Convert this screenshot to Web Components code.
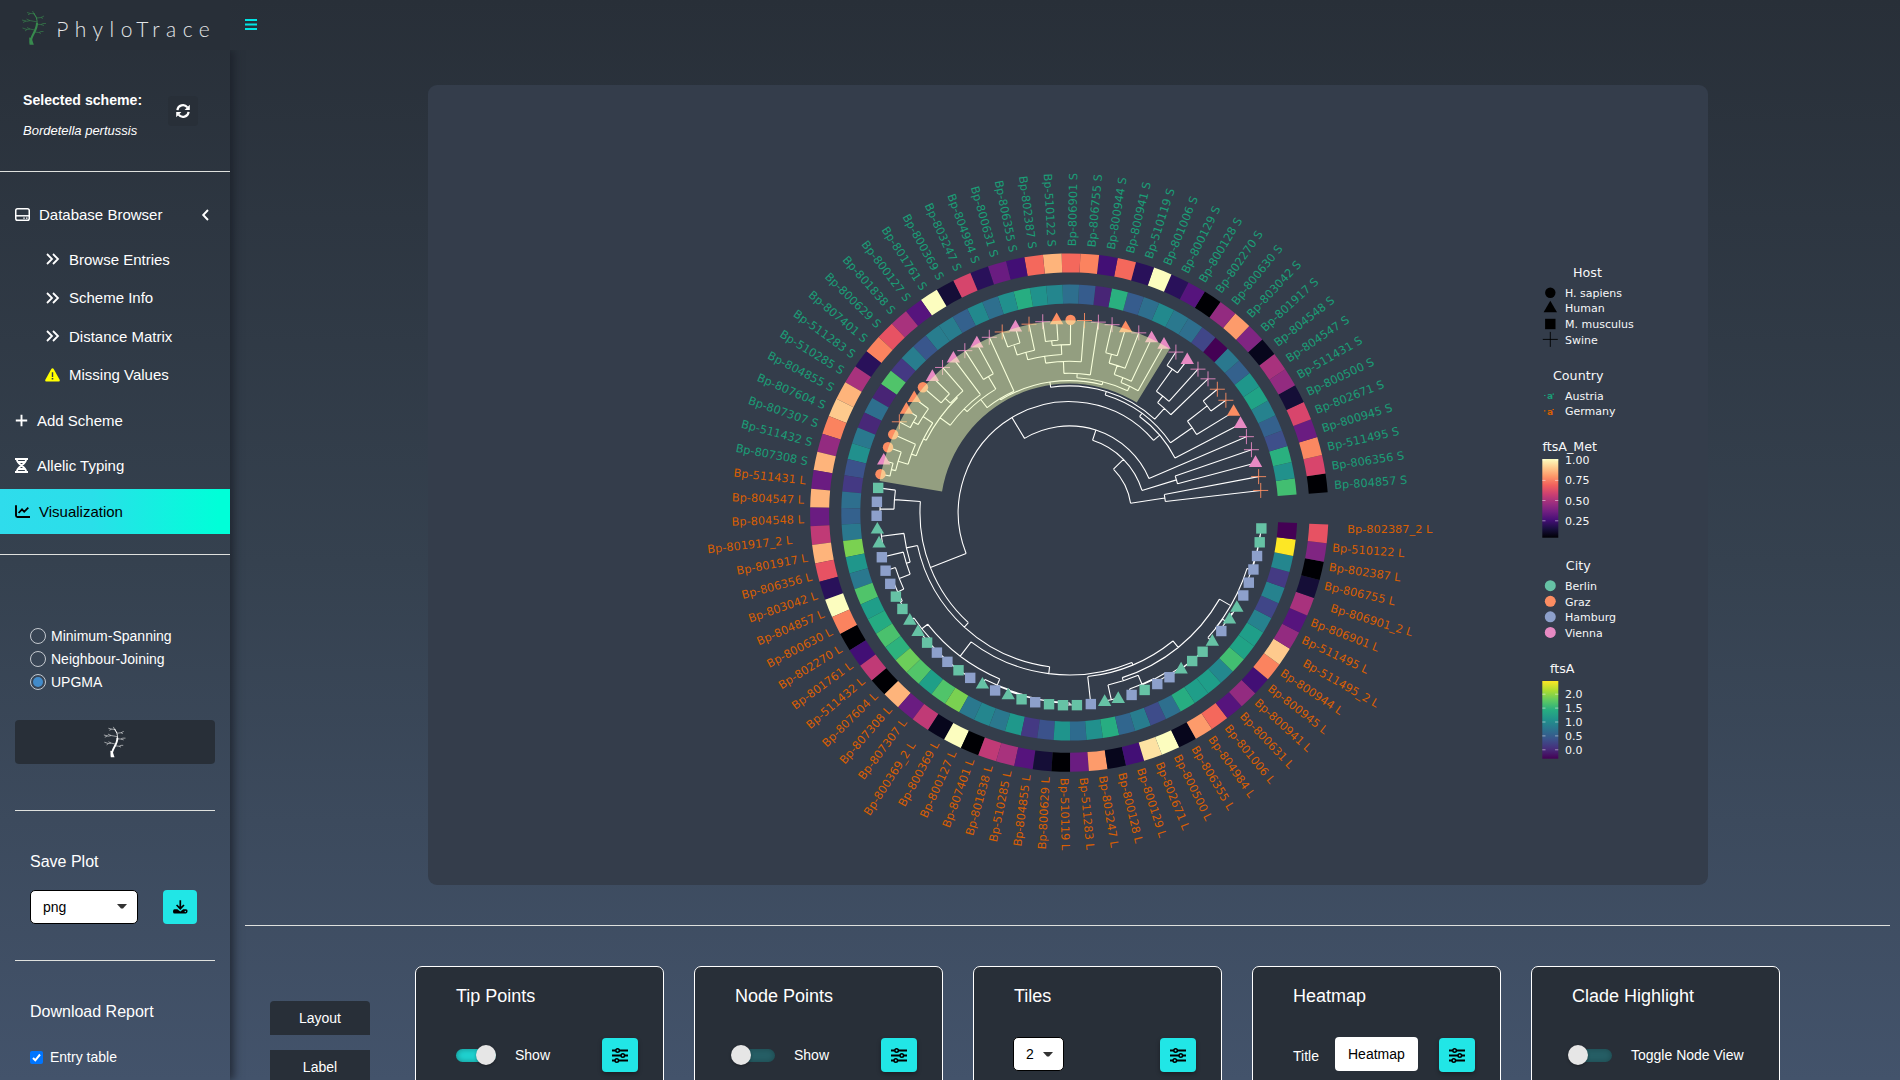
<!DOCTYPE html>
<html lang="en">
<head>
<meta charset="utf-8">
<title>PhyloTrace</title>
<style>
html,body{margin:0;height:1080px;overflow:hidden}
body{font-family:"Liberation Sans",Arial,sans-serif;font-size:14px;color:#fff;background:linear-gradient(#282f38,#35414f 52%,#43536b)}
</style>
</head>
<body>
<phylo-app></phylo-app>
<script>
const define=(name,css,html,setup)=>customElements.define(name,class extends HTMLElement{
  constructor(){
    super();
    const root=this.attachShadow({mode:'open'});
    const t=document.createElement('template');
    t.innerHTML=`<style>*{box-sizing:border-box}${css}</style>${html}`;
    root.append(t.content.cloneNode(true));
    this._setup=setup;
  }
  connectedCallback(){ if(this._setup&&!this._done){this._done=true;this._setup(this.shadowRoot,this);} }
});

/* ---------- icons ---------- */
const ICONS={
  disk:[15,13,'<g fill="none" stroke="currentColor" stroke-width="1.5"><rect x=".75" y=".75" width="13.5" height="11.5" rx="1.8"/><path d="M1 7.8H14"/></g><path d="M8.3 9.4h1.5v1.4H8.3zM11 9.4h1.5v1.4H11z" fill="currentColor"/>'],
  left:[7,12,'<path d="M6 1L1.2 6L6 11" fill="none" stroke="currentColor" stroke-width="1.9"/>'],
  dbl:[13,12,'<path d="M1 1L6 6L1 11M7 1L12 6L7 11" fill="none" stroke="currentColor" stroke-width="1.8"/>'],
  warn:[15,14,'<path d="M7.5.3Q8.3.3 8.7 1L14.8 12Q15 13.6 13.7 13.6H1.3Q0 13.6.2 12L6.3 1Q6.7.3 7.5.3Z" fill="#ff0"/><path d="M6.8 4.3h1.4v4.6H6.8zM6.7 10h1.6v1.6H6.7z" fill="#333d4a"/>'],
  plus:[13,13,'<path d="M6.5 .8V12.2M.8 6.5H12.2" stroke="currentColor" stroke-width="1.9"/>'],
  hour:[13,15,'<path d="M0 0H13V1.9H0ZM0 13.1H13V15H0Z" fill="currentColor"/><path d="M2 2C2 6 11 9 11 13M11 2C11 6 2 9 2 13M2.8 4H10.2M2.8 11H10.2" fill="none" stroke="currentColor" stroke-width="1.9"/>'],
  chart:[15,13,'<path d="M1 .3V10.5Q1 12 2.5 12H15" fill="none" stroke="currentColor" stroke-width="1.9"/><path d="M3.6 8L7 4.4L9.2 6.8L13.3 2.6" fill="none" stroke="currentColor" stroke-width="1.8"/>'],
  sync:[14,14,'<path d="M1.4 6.2A5.6 5.6 0 0 1 11.4 3.400M12.6 7.8A5.6 5.6 0 0 1 2.6 10.600" fill="none" stroke="currentColor" stroke-width="2.200"/><path d="M13.8 .8V6H8.6ZM.2 13.2V8H5.4Z" fill="currentColor"/>'],
  bars:[12,11,'<path d="M0 1H12M0 5.5H12M0 10H12" stroke="currentColor" stroke-width="1.9"/>'],
  down:[15,14,'<path d="M7.3 .2V8M3.6 5L7.3 8.7L11 5" fill="none" stroke="currentColor" stroke-width="1.7"/><path d="M1.6 9.2H4.4L7.3 11.4L10.2 9.2H13Q14.6 9.2 14.6 11T13 13.6H1.6Q0 13.6 0 11.4T1.6 9.2Z" fill="currentColor"/><circle cx="12.3" cy="11.5" r=".7" fill="#21e6e6"/>'],
  sliders:[16,15,'<path d="M0 2.5H16M0 7.5H16M0 12.5H16" stroke="currentColor" stroke-width="2"/><g fill="#21e6e6" stroke="currentColor" stroke-width="1.5"><circle cx="5.6" cy="2.5" r="1.75"/><circle cx="10.8" cy="7.5" r="1.75"/><circle cx="4.8" cy="12.5" r="1.75"/></g>'],
  caret:[10,5,'<path d="M0 0H10L6 4.6H4Z" fill="currentColor"/>'],
  tree:[26,36,'<g fill="none" stroke="currentColor"><path d="M9.800 33.500C8.600 26 16.200 21.500 16 13" stroke-width="2.100"/><path d="M8.200 27.500L8.600 34.800H12.800L10.600 28Z" fill="currentColor" stroke="none"/><path d="M16 14C16.500 9 15 6.500 13 3.500" stroke-width="1"/><path d="M16 8L13.500 5L11.500 1M14 3.800L9.500 3.500L6 2.500M9.500 3.500L7 4.800M15.800 11.800L9 10.600L6 11.300L1 10M9 10.600L5.500 9M5 11L2 12.500M13.500 20L9 19L6 19.500L1.500 18M9 19L6 17.500M6 19.500L4 21M16 8L20 7.500L23 6M20 7.500L22 8.500M15.500 14.200L20 14.500L22 13.500L25 13.500M20 14.500L23 15.500M13 22L18 22.500L20 21.500L22.500 21.500M18 22.500L20 23.500" stroke-width=".7" stroke-opacity=".85"/></g>']
};
define('ui-icon',':host{display:inline-flex;flex:none}svg{display:block;overflow:visible}','',(r,h)=>{
  const [w,ht,body]=ICONS[h.getAttribute('name')];
  const k=+(h.getAttribute('scale')||1);
  r.innerHTML+=`<svg width="${w*k}" height="${ht*k}" viewBox="0 0 ${w} ${ht}">${body}</svg>`;
});

/* ---------- sidebar pieces ---------- */
define('nav-item',`:host{display:flex;align-items:center;height:45px;padding:0 21px 0 15px;font-size:15px;gap:9px}
 :host([sub]){height:38.500px;padding-left:45px;gap:0}
 :host([active]){background:linear-gradient(90deg,#2fdcec 0%,#2adfe9 40%,#00ffd8 95%);color:#000}
 .i{display:flex;min-width:13px}:host([sub]) .i{width:24px;padding-left:1px}:host([sub][icon=warn]) .i{padding-left:0}.t{flex:1}`,
 '<span class="i"></span><span class="t"><slot></slot></span><slot name="end"></slot>',
 (r,h)=>{r.querySelector('.i').innerHTML=`<ui-icon name="${h.getAttribute('icon')}"></ui-icon>`;});

define('radio-option',`:host{display:flex;align-items:center;height:23px;gap:5px}
 i{width:16px;height:16px;border-radius:50%;border:1px solid #c4c9cf;display:flex;align-items:center;justify-content:center}
 :host([checked]) i::after{content:"";width:10px;height:10px;border-radius:50%;background:#428bca}`,
 '<i></i><span><slot></slot></span>');

define('rule-line',':host{display:block;height:1px;background:#dfe1de}','');

define('select-box',`:host{display:flex;align-items:center;justify-content:space-between;height:34px;background:#fff;color:#000;border:1px solid #000;border-radius:5px;padding:0 10px 0 12px;box-sizing:border-box}ui-icon{color:#333}`,
 '<span><slot></slot></span><ui-icon name="caret"></ui-icon>');

define('icon-button',`:host{display:flex;align-items:center;justify-content:center;background:#21e6e6;color:#000;border-radius:4px;width:36px;height:34px;box-shadow:0 2px 4px rgba(0,0,0,.35)}`,'<slot></slot>');

define('side-bar',`:host{display:flex;flex-direction:column;width:230px;height:1080px;flex:none;overflow:visible}
 .logo{height:50px;display:flex;background:#282f38;padding:10px 0 0 21px}
 .logo ui-icon{color:#388a4e}.logo svg{margin-top:0;overflow:visible}
 .body{flex:1;display:flex;flex-direction:column;box-shadow:4px 0 8px rgba(24,28,38,.7);clip-path:inset(0 -20px 0 0);min-height:0}
 .scheme{display:flex;height:121px;padding:0 32px 0 23px;justify-content:space-between;flex:none}
 .scheme b{display:block;font-size:14.100px;line-height:18px;margin-top:41px}
 .scheme i{display:block;font-size:13px;line-height:16px;margin-top:13.500px}
 .sync{width:30px;height:30px;border-radius:4px;background:#282f38;display:flex;align-items:center;justify-content:center;margin-top:46px}
 nav{padding:20px 0 20px;display:flex;flex-direction:column}
 .sub{padding:3px 0 4px}
 nav-item[active]{margin-top:1px}
 .in{margin:0 15px}
 .radios{padding:69px 30px 0}
 .make{margin:27px 15px 46px;height:44px;background:#282f38;border-radius:4px;display:flex;align-items:center;justify-content:center;flex:none}
 h4{margin:0;font-weight:400;font-size:16px;line-height:20px;padding-left:30px}
 .save{display:flex;padding:0 33px 0 30px;justify-content:space-between;margin:18px 0 36px}
 .check{display:flex;gap:7px;padding-left:30px;align-items:center;margin-top:27px}
 .check span{width:13px;height:13px;border-radius:2px;background:#0075ff;display:flex;align-items:center;justify-content:center}`,
 `<div class="logo"><ui-icon name="tree"></ui-icon><svg width="170" height="36">
   <text x="9.300" y="26.800" font-family="Lato" font-weight="300" font-size="21" fill="#e4e6e8" textLength="153.500" lengthAdjust="spacing">PhyloTrace</text>
   <path d="M10 13.500H13.300V18.500H10Z" fill="#282f38"/></svg></div>
 <div class="body">
  <div class="scheme"><div><b>Selected scheme:</b><i>Bordetella pertussis</i></div><div class="sync"><ui-icon name="sync"></ui-icon></div></div>
  <rule-line></rule-line>
  <nav>
   <nav-item icon="disk">Database Browser<ui-icon name="left" slot="end"></ui-icon></nav-item>
   <div class="sub"><nav-item sub icon="dbl">Browse Entries</nav-item><nav-item sub icon="dbl">Scheme Info</nav-item>
   <nav-item sub icon="dbl">Distance Matrix</nav-item><nav-item sub icon="warn">Missing Values</nav-item></div>
   <nav-item icon="plus">Add Scheme</nav-item><nav-item icon="hour">Allelic Typing</nav-item>
   <nav-item icon="chart" active>Visualization</nav-item>
  </nav>
  <rule-line></rule-line>
  <div class="radios"><radio-option>Minimum-Spanning</radio-option><radio-option>Neighbour-Joining</radio-option><radio-option checked>UPGMA</radio-option></div>
  <div class="make"><ui-icon name="tree" scale=".9"></ui-icon></div>
  <rule-line class="in"></rule-line>
  <h4 style="margin-top:40.500px">Save Plot</h4>
  <div class="save"><select-box style="width:108px">png</select-box><icon-button style="width:34px;box-shadow:none"><ui-icon name="down"></ui-icon></icon-button></div>
  <rule-line class="in"></rule-line>
  <h4 style="margin-top:41.500px">Download Report</h4>
  <div class="check"><span><svg width="11" height="11" viewBox="0 0 11 11"><path d="M2 6L4.300 8.300L9 2.500" fill="none" stroke="#fff" stroke-width="2"/></svg></span>Entry table</div>
 </div>`);

/* ---------- control cards ---------- */
define('toggle-switch',`:host{display:flex;align-items:center;width:44px;height:20px}
 .k{width:40px;height:13px;border-radius:7px;background:#265f66;display:flex;align-items:center;box-shadow:inset 0 0 6px rgba(0,0,0,.25);margin-left:4px}
 .k i{width:20px;height:20px;border-radius:50%;background:#e6e6e6;flex:none;margin-left:-4px;box-shadow:0 1px 3px rgba(0,0,0,.35)}
 :host([on]) .k{background:#1fd3d1;box-shadow:inset 0 0 6px rgba(0,0,0,.35)}:host([on]) .k i{margin-left:20px}`,
 '<div class="k"><i></i></div>');

define('control-card',`:host{display:block;width:249px;height:200px;background:#282f38;border:1px solid #fff;border-radius:7px;box-sizing:border-box;flex:none}
 h3{margin:18px 0 0 40px;font-weight:400;font-size:18px;line-height:22px}
 .row{display:flex;align-items:center;height:36px;margin:30px 25px 0 36px}
 .row ::slotted(icon-button){margin-left:auto}`,
 '<h3></h3><div class="row"><slot></slot></div>',(r,h)=>{r.querySelector('h3').textContent=h.getAttribute('heading');});

define('text-field',':host{display:flex;align-items:center;width:83px;height:34px;background:#fff;color:#000;border-radius:4px;padding-left:13px;box-sizing:border-box}','<span><slot></slot></span>');

define('tab-button',':host{display:flex;align-items:center;justify-content:center;width:100px;height:34px;background:#282f38}:host([first]){border-radius:4px 4px 0 0}','<span><slot></slot></span>');

/* ---------- circular phylogeny ---------- */
const TIPS=[
 '804857','806356','511495','800945','802671','800500','511431','804547','804548','801917','803042','800630','802270','800128','800129','801006','510119','800941','800944','806755','806901','510122','802387','806355','800631','804984','803247','800369','801761','800127','801838','800629','807401','511283','510285','804855','807604','807307','511432','807308',
 '511431','804547','804548','801917_2','801917','806356','803042','804857','800630','802270','801761','511432','807604','807308','807307','800369_2','800369','800127','807401','801838','510285','804855','800629','510119','511283','803247','800128','800129','802671','800500','806355','804984','801006','800631','800941','800945','800944','511495_2','511495','806901','806901_2','806755','802387','510122','802387_2'];
const MARKS='+G +G tV +V +V tV tG +G +G +V +V tV +V tV tV +V tG +V +V +G oG tG +V +G tV +G +V tV +V tV +V tV oG tG tG +G oG oG tV oG sB sH sH tB tB sH sH sH sB sB tB tB sB sH sH sB sH tB sH tB sB sH sB sB sB sH tB tB sH sB sH sH tB sB sB tB sH tB tB sH sH sH sH sB sB'.split(' ');
const OUTER='000004 d8456c fb8861 6a1c81 d8456c 150e37 932b80 a8327d 07061c 802582 fd9b6b 932b80 000004 56147d 29115a fcfdbf 29115a f4685c 420f75 fb835f f4685c feb47b f4685c 420f75 6a1c81 29115a d6456c 150e37 fcfdbf 56147d a8327d e75263 fb835f 29115a a8327d feb47b feca8d fb835f 932b80 feb47b 6a1c81 feb47b 6a1c81 c03a76 feb47b e75263 29115a fcfdbf fb835f 000004 420f75 c03a76 000004 feb47b 6a1c81 c03a76 07061c fcfdbf 000004 c03a76 a8327d 56147d 150e37 000004 6a1c81 fd9b6b 07061c 420f75 fde2a3 fcfdbf 07061c fd9b6b f4685c 56147d 932b80 420f75 fb835f feca8d 932b80 56147d a8327d 150e37 000004 802582 e75263'.split(' ');
const INNER='42be71 21918c 2ab07f 3e4f8a 34618d 26828e 20a386 1f968b 34618d 2a788e 440154 404688 2e6f8e 2a788e 22898d 2e6f8e 365c8d 2ab07f 482576 365c8d 2e6f8e 24868e 20928c 27ad81 21908d 2e6f8e 22898d 34618d 287d8e 287d8e 39568c 287d8e 443983 50c46a 482475 2e6f8e 482878 2a788e 21908d 3b528b 443983 2e6f8e 34618d 2a788e 7ad151 1f968b 2a788e 50c46a 1f9e89 25ab82 4ac16d 2db27d 6ccd5a 52c569 1f9f88 50c46a 7ad151 2a788e 24868e 2a788e 1f988b 443983 3b528b 1f948c 2e6b8e 21908d 27ad81 31668e 287d8e 3e4c8a 2e6f8e 27ad81 1f9e89 1f9e89 23888e 42be71 20a386 1f9e89 26828e 404688 26828e 443a83 24868e fde725 440154'.split(' ');
const CITY={B:'#66c2a5',G:'#fc8d62',H:'#8da0cb',V:'#e78ac3'};
/* Internal nodes are [radius, childA, childB] in thirds of a pixel; numbers are tips. */
const ladder=(from,...radii)=>radii.length?[radii[0],from,ladder(from+1,...radii.slice(1))]:from;
const cladeHi=[396,
 [405,[420,14,[436,15,[464,16,[492,17,18]]]],[418,19,[454,20,[475,[504,21,[518,22,23]],[498,24,[530,25,26]]]]]],
 [400,27,[431,[475,28,29],[443,30,[481,[485,31,[506,32,33]],[490,[525,34,[541,35,36]],[505,37,[536,38,[549,39,40]]]]]]]]];
const south=[448,[526,41,[568,42,43]],
 [466,[500,[568,44,45],[512,46,[547,47,[567,48,[573,49,50]]]]],
  [487,[541,ladder(51,563,574,575,576,577,577),ladder(58,561,563,566,568,569,571,577)],
   [495,66,[520,[530,[575,67,68],ladder(69,559,561,571,576,577,577)],[559,ladder(76,560,573,576),ladder(80,559,573,575,576,577)]]]]]];
const TREE=[186,[290,1,2],[228,[336,3,4],[260,5,[333,
  [357,6,[369,[448,7,[523,8,9]],[380,[423,10,[448,11,[530,12,13]]],cladeHi]]],south]]]];

define('phylo-plot',':host{display:block;width:1280px;height:800px;background:#343d4b;border-radius:9px;overflow:hidden}svg{display:block}','<svg width="1280" height="800" viewBox="428 85 1280 800"></svg>',r=>{
  const CX=1069.300,CY=512.600,R=192.700,D=Math.PI/180;
  const ang=t=>6.600+4.151*(t-1);
  const P=(rad,a)=>[(CX+rad*Math.cos(a*D)).toFixed(2),(CY-rad*Math.sin(a*D)).toFixed(2)];
  const arc=(rad,a,b)=>`M${P(rad,a)}A${rad} ${rad} 0 ${b-a>180?1:0} 0 ${P(rad,b)}`;
  let lines='';
  const walk=n=>{
    if(typeof n==='number')return{t:n,r:R};
    const k=n.slice(1).map(walk),rad=n[0]/3;
    lines+=arc(rad,ang(k[0].t),ang(k[1].t));
    k.forEach(c=>lines+=`M${P(rad,ang(c.t))}L${P(c.r,ang(c.t))}`);
    return{t:(k[0].t+k[1].t)/2,r:rad};
  };
  walk(TREE);
  const sector=(r1,r2,a,b)=>`M${P(r2,a)}A${r2} ${r2} 0 0 0 ${P(r2,b)}L${P(r1,b)}A${r1} ${r1} 0 0 1 ${P(r1,a)}Z`;
  const mark=(x,y,s,c)=>s==='o'?`<circle cx="${x}" cy="${y}" r="5.200" fill="${c}"/>`
   :s==='t'?`<path d="M${x} ${y-7.700}L${x+6.700} ${y+3.900}H${x-6.700}Z" fill="${c}"/>`
   :s==='s'?`<rect x="${x-5.200}" y="${y-5.200}" width="10.400" height="10.400" fill="${c}"/>`
   :`<path d="M${x-7.500} ${y}H${x+7.500}M${x} ${y-7.500}V${y+7.500}" stroke="${c}" stroke-width=".9"/>`;
  let marks='',tiles='',labels='';
  TIPS.forEach((id,i)=>{
    const t=i+1,a=ang(t),[x,y]=P(R,a).map(Number);
    marks+=mark(x,y,MARKS[i][0],CITY[MARKS[i][1]]);
    tiles+=`<path d="${sector(209,228,a-2.076,a+2.076)}" fill="#${INNER[i]}"/><path d="${sector(240.200,259.200,a-2.076,a+2.076)}" fill="#${OUTER[i]}"/>`;
    const S=t<=40,two=id.includes('_'),w=11.350*(.686+.635+.361+3.817+.318+(S?.635:.557)+(two?1.136:0));
    const rot=360/85*t,flip=rot>90&&rot<270,off=w*1.007;
    labels+=`<text transform="translate(${x} ${y}) rotate(${(flip?180:0)-rot})" x="${flip?-off-w:off}" y="${flip?4.700:4.100}" fill="${S?'#1b9e77':'#d95f02'}">Bp-${id} ${S?'S':'L'}</text>`;
  });
  const T=(x,y,s,z=11)=>`<text x="${x}" y="${y}" font-size="${z}" fill="#f6f7f8">${s}</text>`;
  const bar=(id,y,h,stops)=>`<linearGradient id="${id}" x1="0" y1="0" x2="0" y2="1">${stops.map((c,i)=>`<stop offset="${i/(stops.length-1)}" stop-color="#${c}"/>`).join('')}</linearGradient><rect x="1542.300" y="${y}" width="16" height="${h}" fill="url(#${id})"/>`;
  const tick=y=>`<path d="M1542.300 ${y}h3.200M1555.100 ${y}h3.200" stroke="#fff" stroke-opacity=".6" stroke-width=".8"/>`;
  let lg=T(1573,276.700,'Host',12.700)+mark(1550.300,292.700,'o','#000')+mark(1550.300,308.400,'t','#000')+mark(1550.300,324,'s','#000')+mark(1550.300,339.400,'+','#000')
   +T(1565,296.800,'H. sapiens')+T(1565,312.200,'Human')+T(1565,328,'M. musculus')+T(1565,344,'Swine')
   +T(1553,380,'Country',12.700)+T(1565,399.800,'Austria')+T(1565,415.200,'Germany')
   +`<g font-weight="700" font-size="9"><text x="1547" y="399.200" fill="#1b9e77">a</text><text x="1547" y="414.500" fill="#d95f02">a</text></g><path d="M1544 395.500h1.500M1552.500 394.200h1.500" stroke="#1b9e77" stroke-width="1.200"/><path d="M1544 410.800h1.500M1552.500 409.500h1.500" stroke="#d95f02" stroke-width="1.200"/>`
   +T(1542.500,451,'ftsA_Met',12.700)+bar('mg',459,78.700,['fcfdbf','feca8d','fd9668','f1605d','cd4071','9e2f7f','721f81','440f76','180f3d','000004'])
   +T(1565,463.800,'1.00')+T(1565,484,'0.75')+T(1565,504.700,'0.50')+T(1565,525,'0.25')+[460,480.400,500.500,520.800].map(tick).join('')
   +T(1565.800,570,'City',12.700);
  [['B','Berlin',585.700],['G','Graz',601.300],['H','Hamburg',616.800],['V','Vienna',632.400]].forEach(([k,n,y])=>lg+=`<circle cx="1550.300" cy="${y}" r="5.500" fill="${CITY[k]}"/>`+T(1565,y+4.300,n));
  lg+=T(1550,672.700,'ftsA',12.700)+bar('vi',681,77.700,['fde725','aadc32','5ec962','27ad81','21918c','2c728e','3b528b','472d7b','440154']);
  ['2.0','1.5','1.0','0.5','0.0'].forEach((s,i)=>lg+=tick(694.200+13.900*i)+T(1565,697.900+13.950*i,s));
  r.querySelector('svg').innerHTML=`<path d="${lines}" fill="none" stroke="#fff" stroke-width="1.100"/>${marks}
   <path d="${sector(129,192.300,ang(13.500),ang(40.500))}" fill="#f2ffb5" fill-opacity=".5"/>${tiles}
   <g font-family="DejaVu Sans,sans-serif" font-size="11.350">${labels}</g><g font-family="DejaVu Sans,sans-serif">${lg}</g>`;
});

/* ---------- shell ---------- */
define('phylo-app',`:host{display:flex;width:1900px;height:1080px;overflow:hidden}
 main{flex:1;display:flex;flex-direction:column;padding:0 10px 0 15px}
 .top{height:85px;flex:none;display:flex;align-items:flex-start;padding:19px 0 0;color:#00e5e5}
 phylo-plot{margin:0 0 40px 183px;flex:none}
 rule-line{flex:none}
 .controls{display:flex;margin:40px 0 0 25px;gap:30px}
 .tabs{display:flex;flex-direction:column;gap:15px;margin:35px 15px 0 0}`,
 `<side-bar></side-bar><main>
  <div class="top"><ui-icon name="bars"></ui-icon></div>
  <phylo-plot></phylo-plot><rule-line></rule-line>
  <div class="controls">
   <div class="tabs"><tab-button first>Layout</tab-button><tab-button>Label</tab-button></div>
   <control-card heading="Tip Points"><toggle-switch on></toggle-switch><span style="margin-left:19px">Show</span><icon-button><ui-icon name="sliders"></ui-icon></icon-button></control-card>
   <control-card heading="Node Points"><toggle-switch></toggle-switch><span style="margin-left:19px">Show</span><icon-button><ui-icon name="sliders"></ui-icon></icon-button></control-card>
   <control-card heading="Tiles"><select-box style="width:51px;margin-left:3px;margin-top:-2px">2</select-box><icon-button><ui-icon name="sliders"></ui-icon></icon-button></control-card>
   <control-card heading="Heatmap"><span style="margin:2px 0 0 4px;width:42px">Title</span><text-field style="margin-top:-2px">Heatmap</text-field><icon-button><ui-icon name="sliders"></ui-icon></icon-button></control-card>
   <control-card heading="Clade Highlight"><toggle-switch></toggle-switch><span style="margin-left:19px">Toggle Node View</span></control-card>
  </div></main>`);
</script>
</body>
</html>
